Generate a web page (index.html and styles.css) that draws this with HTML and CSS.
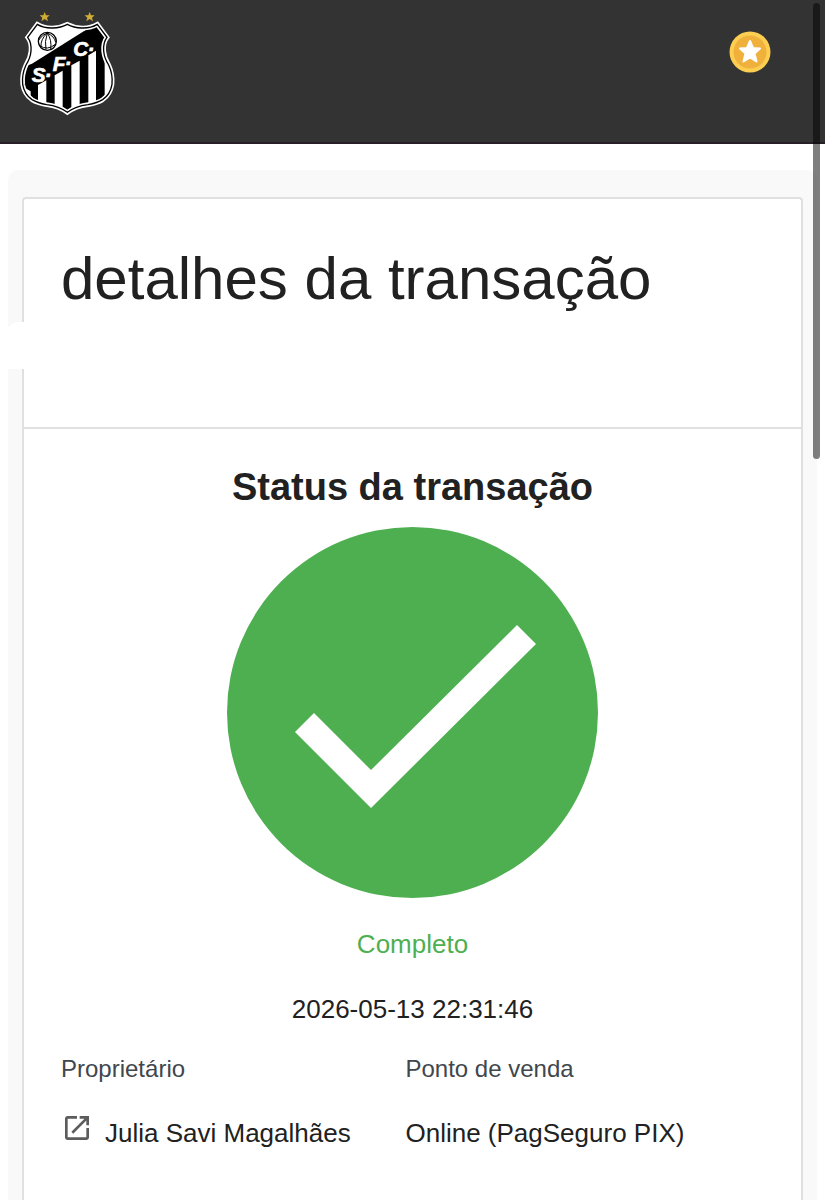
FILE: index.html
```html
<!DOCTYPE html>
<html lang="pt-BR">
  <head>
    <meta charset="UTF-8" />
    <meta name="viewport" content="width=device-width, initial-scale=1.0" />
    <title>detalhes da transação</title>
    <link rel="stylesheet" href="styles.css" />
  </head>
  <body>
    <header class="topbar">
      <a class="crest-link" href="#" aria-label="Santos Futebol Clube">
        <svg class="crest" viewBox="0 0 345 345" aria-hidden="true">
          <defs>
            <path
              id="shield"
              d="M82 58 Q102 70 128 69 Q153 68 172 58 Q191 68 216 69 Q242 70 262 58 L291 97 Q279 112 281 138 Q283 160 296 180 Q309 208 306 238 Q301 268 278 284 Q262 294 234 299 Q196 304 172 322 Q148 304 110 299 Q82 294 66 284 Q43 268 38 238 Q35 208 48 180 Q61 160 63 138 Q65 112 53 97 Z"
            />
            <clipPath id="shield-clip"><use href="#shield" /></clipPath>
          </defs>
          <g fill="#d0ad35">
            <path id="gold-star" d="M104 21l4 10 11 0-8 7 3 11-10-7-10 7 3-11-8-7 11 0z" />
            <use href="#gold-star" x="135" />
          </g>
          <use href="#shield" fill="#000" stroke="#fff" stroke-width="14" />
          <g clip-path="url(#shield-clip)" fill="#fff">
            <path d="M40 48H250L226 76 66 176 40 186Z" />
            <path d="M84 240L109 226V310H84ZM134 211L158 197V310H134ZM184 181L209 167V310H184ZM235 151L258 137V310H235ZM284 165H310V300H284ZM44 248L62 259V300H44Z" />
          </g>
          <use href="#shield" fill="none" stroke="#000" stroke-width="4" />
          <g fill="#fff" stroke="#000" stroke-width="4">
            <circle cx="112" cy="109" r="27" />
            <path
              fill="none"
              stroke-width="3"
              d="M112 84Q91 103 93 126M112 84Q103 110 108 134M112 84Q126 105 122 133M112 84Q134 95 137 112M89 122Q112 138 136 118M86 105Q98 88 112 84"
            />
          </g>
          <g class="crest-letters">
            <text x="65" y="232">S<tspan dx="2" dy="-17">.</tspan></text>
            <text x="128" y="198">F<tspan dx="2" dy="-17">.</tspan></text>
            <text x="190" y="154">C<tspan dx="2" dy="-17">.</tspan></text>
          </g>
        </svg>
      </a>
      <button class="points-button" type="button" aria-label="Pontos">
        <svg viewBox="0 0 42 42" aria-hidden="true">
          <circle cx="21" cy="21" r="20.5" fill="#fdce50" />
          <circle cx="21" cy="21" r="16.5" fill="#f0b13c" />
          <path
            d="M21 10L24 17L31 17.500L25.500 22.500L27.500 30.500L21 26.500L14.500 30.500L16.500 22.500L11 17.500L18 17Z"
            fill="#fff"
            stroke="#fff"
            stroke-width="2"
            stroke-linejoin="round"
          />
        </svg>
      </button>
    </header>

    <main class="panel">
      <div class="card">
        <div class="card-header">
          <h1>detalhes da transação</h1>
          <div class="header-cover"></div>
        </div>
        <section class="card-body">
          <h2>Status da transação</h2>
          <svg class="status-icon" viewBox="0 0 371 371" aria-hidden="true">
            <circle cx="185.500" cy="185.500" r="185.500" fill="#4eaf51" />
            <path d="M68 205L87 186L144 243L290 98L309 117L144 281Z" fill="#fff" />
          </svg>
          <p class="status-text">Completo</p>
          <p class="status-date">2026-05-13 22:31:46</p>
          <dl class="details">
            <div>
              <dt>Proprietário</dt>
              <dd>
                <a class="owner-link" href="#">
                  <svg class="open-icon" viewBox="0 0 24 24" aria-hidden="true">
                    <path
                      d="M19 19H5V5h7V3H5c-1.100 0-2 .9-2 2v14c0 1.100.9 2 2 2h14c1.100 0 2-.9 2-2v-7h-2v7zM14 3v2h3.590l-9.830 9.830 1.410 1.410L19 6.410V10h2V3h-7z"
                      fill="#5c5c5c"
                    />
                  </svg>
                  <span>Julia Savi Magalhães</span>
                </a>
              </dd>
            </div>
            <div>
              <dt>Ponto de venda</dt>
              <dd>Online (PagSeguro PIX)</dd>
            </div>
          </dl>
        </section>
      </div>
    </main>
    <div class="scroll-thumb"></div>
  </body>
</html>
```
FILE: styles.css
```css
* {
  box-sizing: border-box;
}
body {
  display: flex;
  flex-direction: column;
  min-height: 100vh;
  margin: 0;
  background-color: #fff;
  color: #212121;
  font-family: Helvetica, "Liberation Sans", Arial, sans-serif;
  font-size: 26px;
  line-height: 32px;
}
h1,
h2,
p,
dl,
dd {
  margin: 0;
}

/* Top bar */
.topbar {
  display: flex;
  justify-content: space-between;
  align-items: flex-start;
  height: 144px;
  padding: 5px 54px 0 10px;
  background-color: #333;
  border-bottom: 2px solid #262026;
}
.crest {
  display: block;
  width: 115px;
  height: 115px;
}
.crest-letters {
  fill: #fff;
  stroke: #fff;
  stroke-width: 2px;
  font-family: "Liberation Sans", Arial, sans-serif;
  font-size: 62px;
  font-style: italic;
  font-weight: bold;
}
.points-button {
  width: 42px;
  height: 42px;
  margin-top: 26px;
  padding: 0;
  border: none;
  background: none;
  cursor: pointer;
}
.points-button svg {
  display: block;
}

/* Card */
.panel {
  display: flex;
  flex: 1;
  margin: 26px 8px 0;
  padding: 27px 14px 0;
  border-radius: 10px 10px 0 0;
  background-color: #f9f9f9;
}
.card {
  flex: 1;
  border: 2px solid #e0e0e0;
  border-bottom: none;
  border-radius: 4px 4px 0 0;
  background-color: #fff;
}
.card-header {
  position: relative;
  height: 230px;
  padding: 44px 37px;
  border-bottom: 2px solid #e0e0e0;
}
h1 {
  font-size: 60px;
  font-weight: normal;
  line-height: 72px;
}
.header-cover {
  position: absolute;
  top: 123px;
  left: -20px;
  width: 70%;
  height: 47px;
  border-radius: 16px 0 0 0;
  background-color: #fff;
}
.header-cover::before {
  content: "";
  position: absolute;
  top: 10px;
  bottom: 0;
  left: -4px;
  width: 20px;
  background-color: #fff;
}
.card-body {
  display: flex;
  flex-direction: column;
  align-items: center;
  padding: 34px 37px;
}
h2 {
  font-size: 38px;
  line-height: 48px;
}
.status-icon {
  width: 371px;
  max-width: 100%;
  margin: 16px 0 30px;
}
.status-text {
  color: #4eaf51;
}
.status-date {
  margin-top: 33px;
}

/* Owner and point of sale */
.details {
  display: grid;
  grid-template-columns: 49% 51%;
  width: 100%;
  margin-top: 28px;
}
dt {
  color: #40474d;
  font-size: 24px;
}
dd {
  margin-top: 32px;
}
.owner-link {
  display: flex;
  gap: 12px;
  color: inherit;
  text-decoration: none;
}
.open-icon {
  width: 32px;
  height: 32px;
  margin-top: -5px;
}

/* Overlay scroll indicator */
.scroll-thumb {
  position: fixed;
  top: 3px;
  right: 5px;
  width: 7px;
  height: 456px;
  border-radius: 4px;
  background-color: rgba(0, 0, 0, 0.5);
}
```
